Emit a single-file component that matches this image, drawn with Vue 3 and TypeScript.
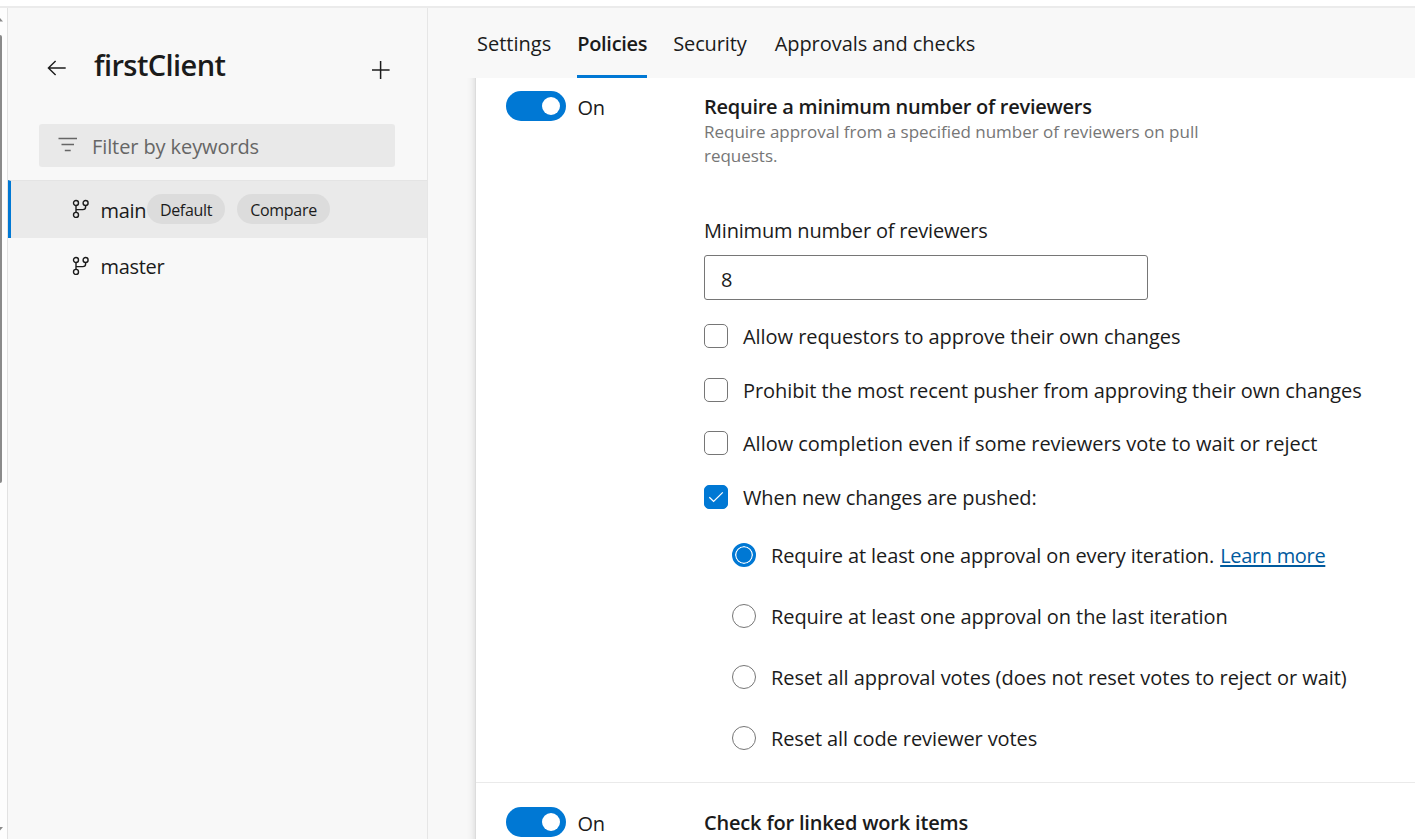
<script setup lang="ts">
import { ref } from 'vue'

interface Branch { name: string; tags: string[] }
interface Tab { label: string; key: string }

const branches: Branch[] = [
  { name: 'main', tags: ['Default', 'Compare'] },
  { name: 'master', tags: [] },
]
const tabs: Tab[] = [
  { label: 'Settings', key: 'settings' },
  { label: 'Policies', key: 'policies' },
  { label: 'Security', key: 'security' },
  { label: 'Approvals and checks', key: 'approvals' },
]
const activeBranch = ref('main')
const activeTab = ref('policies')
const reviewers = ref('8')

const checks = ref([
  { key: 'own', label: 'Allow requestors to approve their own changes', on: false },
  { key: 'pusher', label: 'Prohibit the most recent pusher from approving their own changes', on: false },
  { key: 'complete', label: 'Allow completion even if some reviewers vote to wait or reject', on: false },
  { key: 'pushed', label: 'When new changes are pushed:', on: true },
])
const options = [
  { key: 'every', label: 'Require at least one approval on every iteration.', link: 'Learn more' },
  { key: 'last', label: 'Require at least one approval on the last iteration', link: '' },
  { key: 'votes', label: 'Reset all approval votes (does not reset votes to reject or wait)', link: '' },
  { key: 'code', label: 'Reset all code reviewer votes', link: '' },
]
const chosen = ref('every')
</script>

<template>
  <div class="page">
    <div class="topbar"></div>
    <div class="body">
      <div class="scroll">
        <svg class="up" width="3" height="5" viewBox="0 0 3 5"><path d="M0 0L3 3.5H0z" fill="#8a8a8a" /></svg>
        <div class="thumb"></div>
        <svg class="down" width="3" height="4" viewBox="0 0 3 4"><path d="M0 0H3L0 3.5z" fill="#8a8a8a" /></svg>
      </div>
      <aside class="sidebar">
        <header class="side-head">
          <svg class="back" width="20" height="16" viewBox="0 0 20 16" fill="none" stroke="#1b1b1b" stroke-width="1.4">
            <path d="M1.2 8H18.7M8.6 .9L1.4 8l7.2 7.1" />
          </svg>
          <h1>firstClient</h1>
          <svg class="plus" width="18" height="18" viewBox="0 0 18 18" fill="none" stroke="#1b1b1b" stroke-width="1.5">
            <path d="M8.6 0V18M0 8.9H17.6" />
          </svg>
        </header>
        <div class="filter">
          <svg width="19" height="15" viewBox="0 0 19 15" fill="none" stroke="#666" stroke-width="1.3">
            <path d="M0.5 1.5H19M3.5 7.5H16M6.8 13.5H12.7" />
          </svg>
          <span>Filter by keywords</span>
        </div>
        <div v-for="b in branches" :key="b.name" class="branch" :class="{ active: b.name === activeBranch }" @click="activeBranch = b.name">
          <svg class="fork" width="18" height="20" viewBox="0 0 18 20" fill="none" stroke="#1b1b1b" stroke-width="1.4">
            <circle cx="4" cy="4" r="2.5" /><circle cx="13.6" cy="4" r="2.5" /><circle cx="4" cy="15.9" r="2.5" />
            <path d="M4 6.5V13.4M4 10.6H10.8Q13.6 10.6 13.6 8V6.5" />
          </svg>
          <span class="name">{{ b.name }}</span>
          <span v-for="t in b.tags" :key="t" class="pill" :class="t.toLowerCase()">{{ t }}</span>
        </div>
      </aside>
      <main class="main">
        <nav class="tabs">
          <div v-for="t in tabs" :key="t.key" class="tab" :class="[t.key, { current: t.key === activeTab }]" @click="activeTab = t.key">{{ t.label }}</div>
        </nav>
        <div class="viewport">
          <div class="card">
            <section class="policy first">
              <div class="toggle"><span class="knob"></span></div>
              <span class="state">On</span>
              <div class="detail">
                <h2>Require a minimum number of reviewers</h2>
                <p class="hint">Require approval from a specified number of reviewers on pull<br />requests.</p>
                <label class="field">Minimum number of reviewers</label>
                <input v-model="reviewers" class="count" type="text" />
                <div class="checks">
                  <div v-for="c in checks" :key="c.key" class="check" @click="c.on = !c.on">
                    <span class="box" :class="{ on: c.on }">
                      <svg v-if="c.on" width="16" height="12" viewBox="0 0 16 12" fill="none" stroke="#fff" stroke-width="1.3"><path d="M1.3 6.2L5.6 10.4L14.8 1.4" /></svg>
                    </span>
                    <span class="ctext" :class="c.key">{{ c.label }}</span>
                  </div>
                </div>
                <div class="radios">
                  <div v-for="o in options" :key="o.key" class="radio" @click="chosen = o.key">
                    <span class="ring" :class="{ on: o.key === chosen }"></span>
                    <span class="rtext" :class="o.key">{{ o.label }}</span>
                    <a v-if="o.link" class="link">{{ o.link }}</a>
                  </div>
                </div>
              </div>
            </section>
            <section class="policy second">
              <div class="toggle"><span class="knob"></span></div>
              <span class="state">On</span>
              <div class="detail"><h2 class="linked">Check for linked work items</h2></div>
            </section>
          </div>
        </div>
      </main>
    </div>
  </div>
</template>

<style>
body { margin: 0; overflow: hidden; }
</style>

<style scoped>
* { box-sizing: border-box; }
.page { width: 1415px; height: 839px; overflow: hidden; display: flex; flex-direction: column; background: #f8f8f8; color: #1b1b1b; font-family: "Open Sans", "Noto Sans", sans-serif; font-size: 20px; line-height: 28px; white-space: nowrap; }
.topbar { height: 8px; flex: none; background: #fff; border-bottom: 2px solid #ebebeb; }
.body { flex: 1; display: flex; min-height: 0; }
.scroll { width: 7px; flex: none; background: #fdfdfd; display: flex; flex-direction: column; align-items: flex-start; }
.up { margin-top: 10px; display: block; }
.thumb { margin-top: 12px; width: 2px; height: 448px; background: #8a8a8a; border-top-right-radius: 2px; border-bottom-right-radius: 2px; }
.down { margin-top: auto; margin-bottom: 8px; display: block; }
.sidebar { width: 421px; flex: none; border-left: 1px solid #e2e2e2; border-right: 1px solid #e6e6e6; }
.side-head { height: 116px; display: flex; align-items: flex-start; padding-left: 39px; }
.back { margin-top: 52px; flex: none; }
h1 { margin: 37px 0 0 27px; width: 250px; font-size: 29px; line-height: 40px; font-weight: 600; letter-spacing: -0.58px; }
.plus { margin: 53px 0 0 28px; flex: none; }
.filter { width: 356px; height: 43px; margin: 0 0 13px 31px; padding-left: 19px; display: flex; align-items: center; gap: 15px; background: #e9e9e9; border-radius: 3px; color: #666; letter-spacing: -0.1px; }
.filter svg { margin-top: -3px; }
.filter span { padding-top: 3px; }
.branch { height: 56px; display: flex; align-items: center; padding-left: 64px; }
.branch.active { height: 58px; padding-left: 61px; border-left: 3px solid #0078d4; background: #eaeaea; border-top: 1px solid #e4e4e4; }
.fork { flex: none; margin: -1px 10.5px 0 0; }
.name { padding-top: 2px; letter-spacing: -0.3px; }
.pill { height: 30px; border-radius: 15px; background: #dcdcdc; font-size: 16px; line-height: 32px; text-align: center; letter-spacing: -0.3px; margin-top: -1px; }
.default { width: 78px; margin-left: 0.8px; }
.compare { width: 93px; margin-left: 12px; }
.main { flex: 1; min-width: 0; display: flex; flex-direction: column; }
.tabs { height: 70px; flex: none; display: flex; padding-left: 49px; }
.tab { height: 70px; padding-top: 22px; margin-right: 26px; }
.tab.policies { letter-spacing: -0.3px; }
.tab.security { letter-spacing: -0.12px; margin-right: 28px; }
.tab.approvals { letter-spacing: -0.06px; }
.tab.current { font-weight: 600; border-bottom: 3px solid #0078d4; }
.viewport { flex: 1; overflow: hidden; padding-left: 48px; }
.card { height: 900px; margin-top: -20px; padding-top: 20px; background: #fff; box-shadow: 0 0 9px rgba(0, 0, 0, .18), 0 0 1px rgba(0, 0, 0, .2); }
.policy { display: flex; align-items: flex-start; padding: 13px 0 0 30px; }
.first { height: 705px; border-bottom: 1px solid #eaeaea; }
.second { padding-top: 24px; }
.toggle { width: 60px; height: 30px; flex: none; border-radius: 15px; background: #0078d4; display: flex; align-items: center; justify-content: flex-end; padding-right: 6px; }
.knob { width: 18px; height: 18px; border-radius: 50%; background: #fff; }
.state { width: 126px; padding-top: 3px; margin-left: 12px; letter-spacing: -0.2px; text-indent: -0.5px; }
.detail { width: 711px; }
h2 { margin: 2px 0 0; font-size: 20px; line-height: 28px; font-weight: 600; letter-spacing: -0.26px; }
.linked { letter-spacing: -0.18px; }
.hint { margin: -1px 0 0; font-size: 17px; line-height: 24px; color: #767676; letter-spacing: -0.02px; }
.field { display: block; margin-top: 49px; letter-spacing: -0.19px; }
.count { display: block; width: 444px; height: 45px; margin-top: 10px; padding: 4px 16px 0; border: 1px solid #767676; border-radius: 3px; font: inherit; color: inherit; outline: none; }
.checks { margin-top: 22px; display: flex; flex-direction: column; }
.check { height: 53.7px; display: flex; align-items: flex-start; gap: 15px; }
.ctext, .rtext, .link { padding-top: 1px; }
.own { letter-spacing: -0.05px; }
.pusher { letter-spacing: -0.08px; }
.complete { letter-spacing: -0.03px; }
.pushed { letter-spacing: -0.1px; }
.box { width: 24px; height: 24px; margin-top: 2px; flex: none; border: 1px solid #767676; border-radius: 5px; display: flex; align-items: center; justify-content: center; }
.box.on { background: #0078d4; border-color: #0078d4; }
.radios { padding-left: 28px; margin-top: 4px; }
.radio { height: 61px; display: flex; align-items: flex-start; }
.every { letter-spacing: -0.1px; }
.last { letter-spacing: -0.08px; }
.votes { letter-spacing: -0.03px; }
.code { letter-spacing: -0.1px; }
.ring { width: 24px; height: 24px; margin: 2px 15px 0 0; flex: none; border: 1px solid #767676; border-radius: 50%; }
.ring.on { border: 3px solid #0078d4; background: #0078d4; box-shadow: inset 0 0 0 1.3px #fff; }
.link { margin-left: 6px; color: #005a9e; letter-spacing: -0.32px; text-decoration: underline; text-underline-offset: 2px; text-decoration-thickness: 2px; text-decoration-skip-ink: none; }
</style>
